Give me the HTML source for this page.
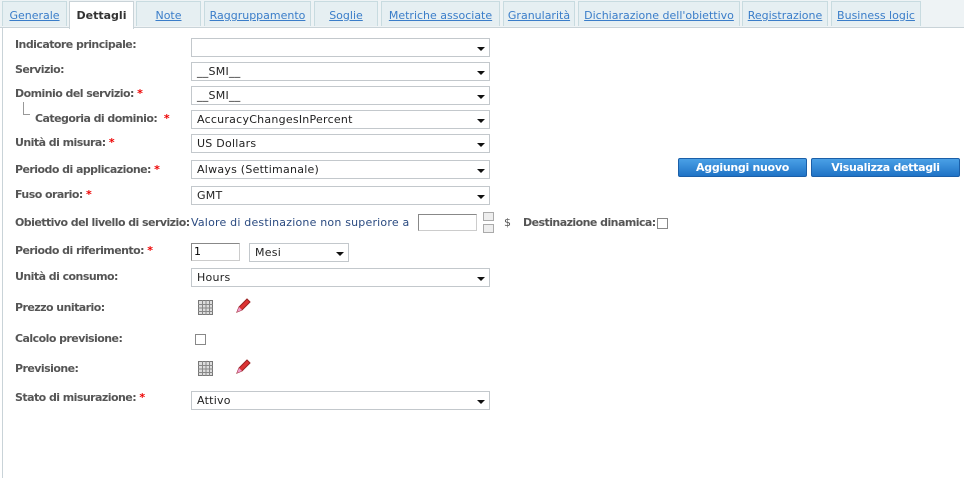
<!DOCTYPE html>
<html><head><meta charset="utf-8"><style>
body{margin:0;width:964px;height:478px;background:#fff;position:relative;overflow:hidden;font-family:"DejaVu Sans","Liberation Sans",sans-serif;}
.tabbar{position:absolute;left:0;top:0;width:964px;height:27px;background:#eef3f5;border-bottom:1px solid #c9d3d8;}
.tab{position:absolute;top:1px;height:25px;background:#e6eff2;border:1px solid #c8dbe0;border-bottom:none;font-size:11px;color:#3a7dc9;text-decoration:underline;text-align:center;line-height:27px;box-sizing:border-box;}
.tab.act{background:#fff;color:#333;font-weight:bold;text-decoration:none;height:28px;border-color:#c9d3d8;}
.content{position:absolute;left:2px;top:28px;width:962px;height:450px;border-left:1px solid #c9d3d8;}
.lbl{position:absolute;left:15px;font-size:11px;font-weight:bold;color:#555;letter-spacing:-0.55px;white-space:nowrap;}
.req{color:#e00;font-weight:bold;}
.sel{position:absolute;left:191px;width:299px;height:19px;border:1px solid #c3c8cc;box-sizing:border-box;font-size:11px;color:#222;line-height:18px;padding-left:5px;background:#fff;letter-spacing:0.25px;}
.sel:after{content:"";position:absolute;right:4px;top:8px;border-left:4px solid transparent;border-right:4px solid transparent;border-top:4px solid #111;}
.btn{position:absolute;top:158px;height:19px;border-radius:2px;background:linear-gradient(#4aa0e6,#1f73c6);border:1px solid #1b5fa8;color:#fff;font-size:11px;font-weight:bold;text-align:center;line-height:18px;box-sizing:border-box;letter-spacing:-0.3px;}
.cb{position:absolute;width:11px;height:11px;border:1px solid #888;box-sizing:border-box;background:#fff;}
.txt{position:absolute;font-size:11px;color:#2a4a80;white-space:nowrap;letter-spacing:0.2px;}
</style></head><body>
<div class="tabbar">
<div class="tab" style="left:2px;width:65px">Generale</div>
<div class="tab act" style="left:69px;width:65px">Dettagli</div>
<div class="tab" style="left:136px;width:65px">Note</div>
<div class="tab" style="left:204px;width:107px">Raggruppamento</div>
<div class="tab" style="left:314px;width:64px">Soglie</div>
<div class="tab" style="left:381px;width:119px">Metriche associate</div>
<div class="tab" style="left:503px;width:72px">Granularità</div>
<div class="tab" style="left:578px;width:162px">Dichiarazione dell'obiettivo</div>
<div class="tab" style="left:742px;width:86px">Registrazione</div>
<div class="tab" style="left:831px;width:90px">Business logic</div>
</div>
<div class="content"></div>

<div class="lbl" style="top:38px">Indicatore principale:</div>
<div class="sel" style="top:38px"></div>
<div class="lbl" style="top:63px">Servizio:</div>
<div class="sel" style="top:62px">__SMI__</div>
<div class="lbl" style="top:87px">Dominio del servizio: <span class="req">*</span></div>
<div class="sel" style="top:86px">__SMI__</div>
<div style="position:absolute;left:23px;top:102px;width:6px;height:12px;border-left:1px solid #999;border-bottom:1px solid #999"></div>
<div class="lbl" style="top:112px;left:35px">Categoria di dominio: &nbsp;<span class="req">*</span></div>
<div class="sel" style="top:110px">AccuracyChangesInPercent</div>
<div class="lbl" style="top:136px">Unità di misura: <span class="req">*</span></div>
<div class="sel" style="top:134px">US Dollars</div>
<div class="lbl" style="top:163px">Periodo di applicazione: <span class="req">*</span></div>
<div class="sel" style="top:160px">Always (Settimanale)</div>
<div class="btn" style="left:678px;width:129px">Aggiungi nuovo</div>
<div class="btn" style="left:811px;width:149px">Visualizza dettagli</div>
<div class="lbl" style="top:188px">Fuso orario: <span class="req">*</span></div>
<div class="sel" style="top:186px">GMT</div>
<div class="lbl" style="top:216px">Obiettivo del livello di servizio:</div>
<div class="txt" style="left:191px;top:216px">Valore di destinazione non superiore a</div>
<div style="position:absolute;left:418px;top:214px;width:59px;height:17px;border:1px solid #888;border-right-color:#ccc;border-bottom-color:#ccc;box-sizing:border-box"></div>
<div style="position:absolute;left:483px;top:212px;width:11px;height:9px;border:1px solid #aaa;box-sizing:border-box;background:#eee"></div>
<div style="position:absolute;left:483px;top:224px;width:11px;height:9px;border:1px solid #aaa;box-sizing:border-box;background:#eee"></div>
<div class="txt" style="left:504px;top:216px;color:#555">$</div>
<div class="lbl" style="left:523px;top:216px">Destinazione dinamica:</div>
<div class="cb" style="left:657px;top:218px"></div>
<div class="lbl" style="top:244px">Periodo di riferimento: <span class="req">*</span></div>
<div style="position:absolute;left:191px;top:243px;width:49px;height:18px;border:1px solid #888;border-right-color:#ccc;border-bottom-color:#ccc;box-sizing:border-box;font-size:11px;line-height:16px;padding-left:2px">1</div>
<div class="sel" style="top:243px;left:249px;width:100px">Mesi</div>
<div class="lbl" style="top:270px">Unità di consumo:</div>
<div class="sel" style="top:268px">Hours</div>
<div class="lbl" style="top:301px">Prezzo unitario:</div>
<svg style="position:absolute;left:198px;top:300px" width="15" height="15"><rect x="0.5" y="0.5" width="14" height="14" fill="#ddd" stroke="#777"/><path d="M0 4.5H15M0 8H15M0 11.5H15M4.5 0V15M8 0V15M11.5 0V15" stroke="#888"/></svg>
<svg style="position:absolute;left:235px;top:298px" width="16" height="16"><path d="M2 14L4 9L12 1L15 4L7 12Z" fill="#d33" stroke="#922"/><path d="M2 14L4 9L7 12Z" fill="#e9c"/></svg>
<div class="lbl" style="top:332px">Calcolo previsione:</div>
<div class="cb" style="left:195px;top:334px"></div>
<div class="lbl" style="top:362px">Previsione:</div>
<svg style="position:absolute;left:198px;top:361px" width="15" height="15"><rect x="0.5" y="0.5" width="14" height="14" fill="#ddd" stroke="#777"/><path d="M0 4.5H15M0 8H15M0 11.5H15M4.5 0V15M8 0V15M11.5 0V15" stroke="#888"/></svg>
<svg style="position:absolute;left:235px;top:359px" width="16" height="16"><path d="M2 14L4 9L12 1L15 4L7 12Z" fill="#d33" stroke="#922"/><path d="M2 14L4 9L7 12Z" fill="#e9c"/></svg>
<div class="lbl" style="top:391px">Stato di misurazione: <span class="req">*</span></div>
<div class="sel" style="top:391px">Attivo</div>
</body></html>
